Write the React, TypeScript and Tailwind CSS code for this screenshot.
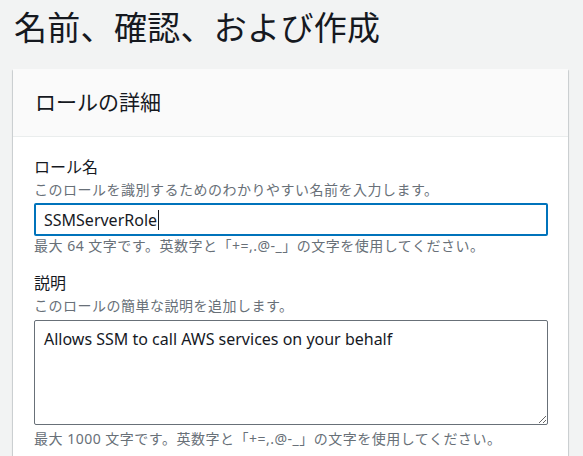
const FONT = "font-['Noto_Sans','Noto_Sans_CJK_JP',sans-serif]";

function Field({
  label,
  hint,
  note,
  children,
}: {
  label: string;
  hint: string;
  note: string;
  children: React.ReactNode;
}) {
  return (
    <div className="flex flex-col">
      <div className="text-[16px] leading-[22px] text-[#16191f]">{label}</div>
      <div className="mt-[2px] text-[14px] leading-[20px] tracking-[0.5px] text-[#687078]">{hint}</div>
      {children}
      <div className="text-[14px] leading-[20px] tracking-[0.5px] text-[#687078]">{note}</div>
    </div>
  );
}

export default function App() {
  return (
    <div className={`h-[456px] w-[583px] overflow-hidden bg-[#f2f3f3] ${FONT}`}>
      <h1 className="pl-[14px] pt-[6px] text-[33px] leading-[44px] font-normal tracking-[0.3px] text-[#16191f]">
        名前、確認、および作成
      </h1>

      <div className="ml-[13px] mt-[19px] w-[555px] rounded-[1px] bg-white shadow-[0_1px_1px_0_rgba(0,28,36,0.3),1px_1px_1px_0_rgba(0,28,36,0.15),-1px_1px_1px_0_rgba(0,28,36,0.15)]">
        {/* ヘッダー */}
        <div className="flex h-[68px] items-center border-b border-[#eaeded] bg-[#fafafa] px-[22px]">
          <h2 className="text-[21px] font-normal text-[#16191f]">ロールの詳細</h2>
        </div>

        <div className="flex flex-col gap-[16px] px-[21px] pt-[19px] pb-[20px]">
          <Field
            label="ロール名"
            hint="このロールを識別するためのわかりやすい名前を入力します。"
            note="最大 64 文字です。英数字と「+=,.@-_」の文字を使用してください。"
          >
            <div className="mt-[3px] flex h-[33px] w-[514px] items-center rounded-[2px] border-2 border-[#0073bb] bg-white px-[8px] text-[16px] text-[#16191f]">
              SSMServerRole
              <span className="ml-[1px] h-[20px] w-px bg-[#16191f]" />
            </div>
          </Field>

          <Field
            label="説明"
            hint="このロールの簡単な説明を追加します。"
            note="最大 1000 文字です。英数字と「+=,.@-_」の文字を使用してください。"
          >
            <textarea
              readOnly
              defaultValue="Allows SSM to call AWS services on your behalf"
              className="mt-[4px] mb-[4px] block h-[105px] w-[514px] resize-y rounded-[2px] border border-[#687078] bg-white px-[9px] py-[6px] text-[16px] leading-[24px] text-[#16191f] outline-none"
            />
          </Field>
        </div>
      </div>
    </div>
  );
}
